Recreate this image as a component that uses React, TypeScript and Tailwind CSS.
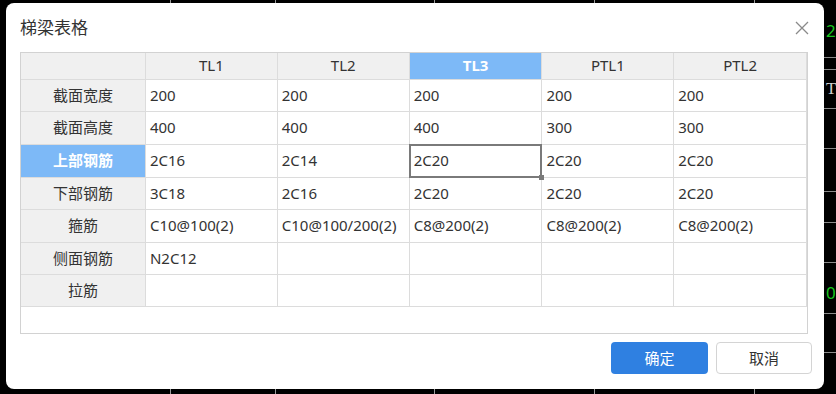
import React from 'react';

const COLS = ['TL1', 'TL2', 'TL3', 'PTL1', 'PTL2'];
const COL_W = [126, 132, 132, 133, 132, 133];

const ROWS: { label: string; h: number; cells: string[] }[] = [
  { label: '截面宽度', h: 32, cells: ['200', '200', '200', '200', '200'] },
  { label: '截面高度', h: 33, cells: ['400', '400', '400', '300', '300'] },
  { label: '上部钢筋', h: 33, cells: ['2C16', '2C14', '2C20', '2C20', '2C20'] },
  { label: '下部钢筋', h: 32, cells: ['3C18', '2C16', '2C20', '2C20', '2C20'] },
  { label: '箍筋', h: 33, cells: ['C10@100(2)', 'C10@100/200(2)', 'C8@200(2)', 'C8@200(2)', 'C8@200(2)'] },
  { label: '侧面钢筋', h: 32, cells: ['N2C12', '', '', '', ''] },
  { label: '拉筋', h: 32, cells: ['', '', '', '', ''] },
];

const SEL_ROW = 2;
const SEL_COL = 2;

const font = { fontFamily: '"Noto Sans", "Noto Sans CJK SC", sans-serif' };

// CAD drawing bits peeking out behind the dialog
const Backdrop: React.FC = () => (
  <div className="absolute inset-0">
    {[170, 275, 434, 594, 754].map(x => (
      <div key={x} className="absolute top-0 h-full w-px bg-[#9a9a9a]" style={{ left: x }} />
    ))}
    {[57, 69, 108, 148, 191, 222, 262, 313, 352].map(y => (
      <div key={y} className="absolute right-0 w-[14px] h-px bg-[#8a8a8a]" style={{ top: y }} />
    ))}
    <span className="absolute left-[826px] top-[22px] text-[17px] leading-none text-[#19c41e]">20</span>
    <span className="absolute left-[826px] top-[80px] text-[17px] leading-none text-[#cfcfcf]" style={{ fontFamily: '"Liberation Serif", serif' }}>T</span>
    <span className="absolute left-[826px] top-[284px] text-[17px] leading-none text-[#19c41e]">0</span>
  </div>
);

export default function App() {
  return (
    <div className="relative w-[836px] h-[394px] bg-black overflow-hidden" style={font}>
      <Backdrop />
      <div className="absolute left-[6px] top-[3px] w-[818px] h-[386px] bg-white rounded-[8px] flex flex-col px-[14px]">
        <div className="h-[49px] flex items-center justify-between">
          <span className="text-[17px] text-[#333]">梯梁表格</span>
          <svg width="14" height="14" viewBox="0 0 14 14" className="mr-[1px]">
            <path d="M1 1L13 13M13 1L1 13" stroke="#8a8a8a" strokeWidth="1.3" />
          </svg>
        </div>

        <div className="w-[788px] h-[282px] border border-[#d2d2d2]">
          <table className="table-fixed border-collapse text-[15px] text-[#333]">
            <colgroup>
              {COL_W.map((w, i) => (
                <col key={i} style={{ width: i === 0 ? w - 1 : w }} />
              ))}
            </colgroup>
            <thead>
              <tr className="h-[26px]">
                <th className="bg-[#f0f0f0] border-r border-b border-[#dcdcdc]" />
                {COLS.map((c, i) => (
                  <th
                    key={c}
                    className={`border-r border-b border-[#dcdcdc] p-0 text-center leading-none ${
                      i === SEL_COL ? 'bg-[#7db9f7] text-white font-bold' : 'bg-[#f0f0f0] font-normal'
                    }`}
                  >
                    {c}
                  </th>
                ))}
              </tr>
            </thead>
            <tbody>
              {ROWS.map((r, ri) => (
                <tr key={r.label} style={{ height: r.h }}>
                  <td
                    className={`border-r border-b border-[#dcdcdc] text-center p-0 leading-none ${
                      ri === SEL_ROW ? 'bg-[#7db9f7] text-white font-bold' : 'bg-[#f0f0f0]'
                    }`}
                  >
                    {r.label}
                  </td>
                  {r.cells.map((v, ci) => (
                    <td key={ci} className="relative border-r border-b border-[#dcdcdc] px-[4px] py-0 leading-none">
                      {v}
                      {ri === SEL_ROW && ci === SEL_COL && (
                        <>
                          <div className="absolute -left-px -top-px -right-px -bottom-px border-2 border-[#7a7a7a]" />
                          <div className="absolute -right-[3px] -bottom-[3px] w-[5px] h-[5px] bg-[#7a7a7a]" />
                        </>
                      )}
                    </td>
                  ))}
                </tr>
              ))}
            </tbody>
          </table>
        </div>

        <div className="flex justify-end gap-[8px] mt-[8px] -mr-[2px]">
          <button className="w-[97px] h-[32px] rounded-[4px] bg-[#2f80e1] text-white text-[15px]">确定</button>
          <button className="w-[96px] h-[32px] rounded-[4px] bg-white border border-[#d4d4d4] text-[#333] text-[15px]">取消</button>
        </div>
      </div>
    </div>
  );
}
